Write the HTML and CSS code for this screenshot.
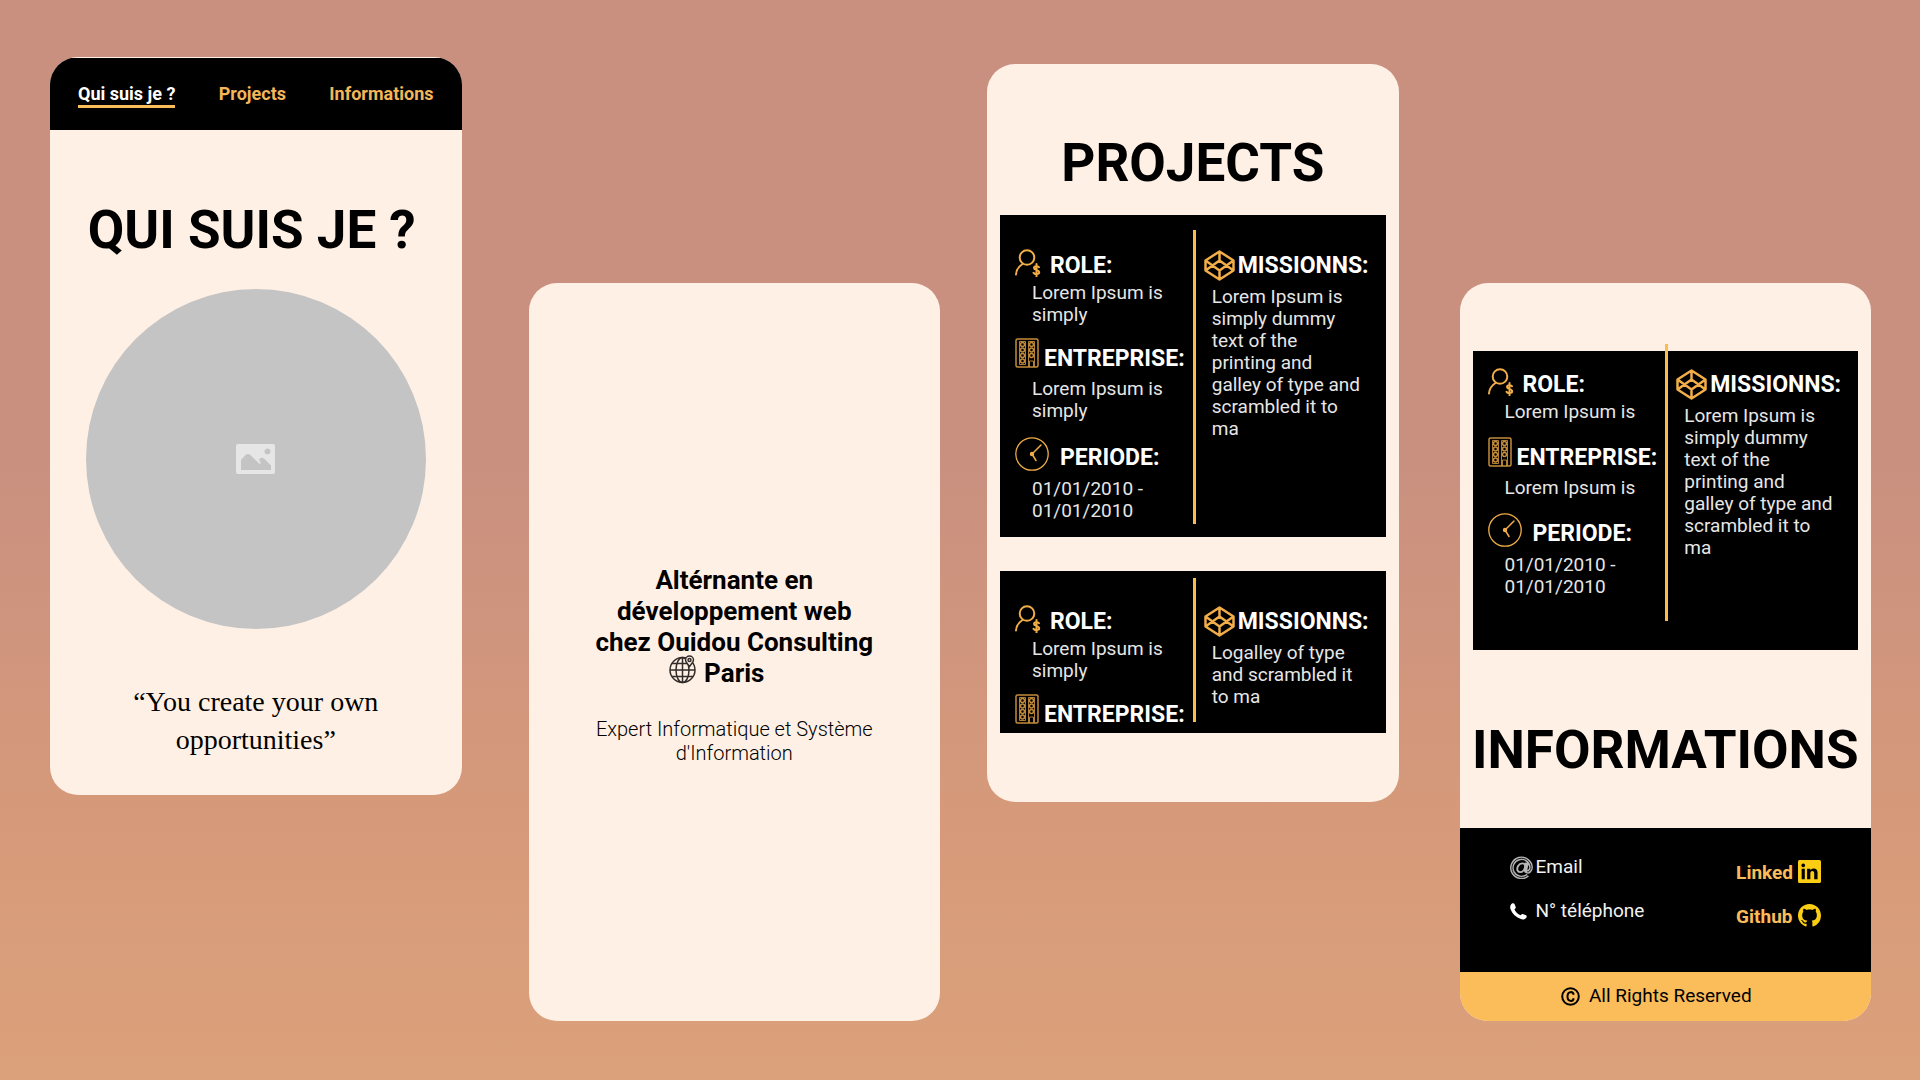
FILE: index.html
```html
<!DOCTYPE html>
<html lang="fr">
<head>
<meta charset="utf-8">
<title>Portfolio</title>
<link rel="stylesheet" href="styles.css">
</head>
<body>
<svg class="sprite" aria-hidden="true">
  <symbol id="role" viewBox="0 0 26 28">
    <g fill="none" stroke="currentColor" stroke-width="2" stroke-linecap="round">
      <circle cx="12" cy="8.500" r="7.300"/>
      <path d="M7.500 15C3.500 17.500 1.300 21 1 25.500"/>
      <path d="M24 18.200c-.8-1.400-5-1.700-5 .9 0 2.500 5.200 1.500 5.200 4.200 0 2.400-4.700 2.300-5.700.5M21.500 15v12.500"/>
    </g>
  </symbol>
  <symbol id="building" viewBox="0 0 24 30">
    <g fill="none" stroke="currentColor">
      <rect x="1" y="1" width="22" height="28" rx="1.500" stroke-width="1.500"/>
      <path d="M4.500 3.500h6v23h-6zM13.500 29V3.500h6V29M14.500 29v-6h4v6" stroke-width=".9"/>
      <g stroke-width="1.500">
        <circle cx="7.500" cy="6.500" r="2"/><circle cx="7.500" cy="12" r="2"/><circle cx="7.500" cy="17.500" r="2"/><circle cx="7.500" cy="23" r="2"/>
        <circle cx="16.500" cy="6.500" r="2"/><circle cx="16.500" cy="12" r="2"/><circle cx="16.500" cy="17.500" r="2"/>
      </g>
    </g>
  </symbol>
  <symbol id="clock" viewBox="0 0 34 34">
    <g fill="none" stroke="currentColor" stroke-linecap="round">
      <circle cx="17" cy="17" r="16.200" stroke-width="1.300"/>
      <path d="M26 8l-9 9 4 6.500" stroke-width="1.500"/>
    </g>
    <circle cx="17" cy="17" r="2.200" fill="currentColor"/>
  </symbol>
  <symbol id="codepen" viewBox="0 0 31 31">
    <path d="M15.500 1.500l14 9v10l-14 9-14-9v-10zM15.500 1.500v9M15.500 20.500v9M1.500 10.500l14 10 14-10M1.500 20.500l14-10 14 10" fill="none" stroke="currentColor" stroke-width="2.500" stroke-linejoin="round"/>
  </symbol>
  <symbol id="image" viewBox="0 0 39 30">
    <path fill-rule="evenodd" fill="currentColor" d="M2 0h35a2 2 0 0 1 2 2v26a2 2 0 0 1-2 2H2a2 2 0 0 1-2-2V2a2 2 0 0 1 2-2zM5 26h30v-4.500l-7-7q-2-1.500-4 0l-1 1.500 2 3-1.500 1-9-9q-3-2-5 0L5 16zM31.500 4.500a3 3 0 1 0 .01 0z"/>
  </symbol>
  <symbol id="globe" viewBox="0 0 27 29">
    <g fill="none" stroke="currentColor" stroke-width="1.500">
      <circle cx="13.500" cy="15" r="12.500"/><ellipse cx="13.500" cy="15" rx="6.500" ry="12.500"/>
      <path d="M13.500 2.500v25M1 15h25M3 8.500h16M3 21.500h21"/>
      <path d="M20.500 11.500c-2-3-4-4.500-4-6.500a4 4 0 0 1 8 0c0 2-2 3.500-4 6.500z" fill="#fff0e5"/><circle cx="20.500" cy="5" r="1.500"/>
    </g>
  </symbol>
  <symbol id="at" viewBox="0 0 24 24">
    <g fill="none" stroke="currentColor">
      <path d="M18.500 20A10 10 0 1 1 22 12c-.3 3.200-2.200 4.700-4 4.500-2-.2-1.900-2-1.500-3.500L17.500 7" stroke-width="3.800"/>
      <path d="M16 10.500c-.5-4-5.500-3.500-7.500 0s-.5 6.300 2 6.300c2.700 0 5-3 5.500-6.300z" stroke-width="2"/>
      <path d="M18.500 20A10 10 0 1 1 22 12c-.3 3.200-2.200 4.700-4 4.500" stroke="#000" stroke-width=".9"/>
    </g>
  </symbol>
  <symbol id="phone" viewBox="0 0 17 17">
    <path fill="currentColor" d="M1 1.500C2 0 4 0 4.500 1l1.300 3.200c.3 1-1 1.500-1.300 2.200 1 2.400 3.500 4.700 6 5.800.8-.3 1.200-1.500 2.200-1.200l3.300 1.300c1 .5 1 2-.2 3-1.300 1.300-3.300 1.500-5 .8C5.500 14 2 10.500.5 6 0 4.500 0 3 1 1.500z"/>
  </symbol>
  <symbol id="linkedin" viewBox="0 0 22 22">
    <path fill="currentColor" fill-rule="evenodd" d="M1.500 0h19A1.500 1.500 0 0 1 22 1.500v19a1.500 1.500 0 0 1-1.500 1.500h-19A1.500 1.500 0 0 1 0 20.500v-19A1.500 1.500 0 0 1 1.500 0zM3.500 8.300v10h3v-10zM5 3.300a1.800 1.800 0 1 0 .01 0zM8.700 8.300v10h3.100v-5.500c0-3 3.700-3 3.700-.2v5.700h3.200v-6.500c0-4.500-5-4.700-6.900-2V8.300z"/>
  </symbol>
  <symbol id="github" viewBox="0 0 16 16">
    <path fill="currentColor" d="M8 0C3.580 0 0 3.580 0 8c0 3.540 2.290 6.530 5.470 7.590.4.070.55-.17.55-.38 0-.19-.01-.82-.01-1.490-2.010.37-2.530-.49-2.690-.94-.09-.23-.48-.94-.82-1.130-.28-.15-.68-.52-.01-.53.63-.01 1.080.58 1.230.82.72 1.210 1.870.87 2.330.66.07-.52.28-.87.51-1.070-1.780-.2-3.640-.89-3.640-3.950 0-.87.31-1.590.82-2.150-.08-.2-.36-1.020.08-2.120 0 0 .67-.21 2.200.82.64-.18 1.320-.27 2-.27s1.360.09 2 .27c1.530-1.040 2.200-.82 2.200-.82.44 1.100.16 1.920.08 2.120.51.56.82 1.270.82 2.150 0 3.070-1.870 3.750-3.650 3.950.29.25.54.73.54 1.480 0 1.070-.01 1.930-.01 2.200 0 .21.15.46.55.38A8.010 8.010 0 0 0 16 8c0-4.420-3.580-8-8-8z"/>
  </symbol>
  <symbol id="copyright" viewBox="0 0 19 19">
    <g fill="none" stroke="currentColor" stroke-width="2">
      <circle cx="9.500" cy="9.500" r="8.300"/>
      <path d="M12.700 7.800C12 4 6.500 4 6.500 9.500s5.500 5.500 6.200 1.700"/>
    </g>
  </symbol>
</svg>

<main class="board">
  <section class="screen screen--about" id="about">
    <nav class="nav">
      <a class="nav__link nav__link--active" href="#about">Qui suis je ?</a>
      <a class="nav__link" href="#projects">Projects</a>
      <a class="nav__link" href="#informations">Informations</a>
    </nav>
    <h1 class="title">QUI SUIS JE ?</h1>
    <div class="portrait"><svg class="portrait__icon"><use href="#image"/></svg></div>
    <blockquote class="quote">“You create your own<br>opportunities”</blockquote>
  </section>

  <section class="screen screen--job">
    <h2 class="job">Altérnante en développement web chez Ouidou Consulting <span class="job__city"><svg class="job__globe"><use href="#globe"/></svg>Paris</span></h2>
    <p class="degree">Expert Informatique et Système d'Information</p>
  </section>

  <section class="screen screen--projects" id="projects">
    <h2 class="title">PROJECTS</h2>
    <article class="panel panel--full">
      <div class="facts">
        <div class="fact fact--role">
          <h3 class="fact__head"><svg class="fact__icon"><use href="#role"/></svg>ROLE:</h3>
          <p class="text">Lorem Ipsum is simply</p>
        </div>
        <div class="fact fact--company">
          <h3 class="fact__head"><svg class="fact__icon"><use href="#building"/></svg>ENTREPRISE:</h3>
          <p class="text">Lorem Ipsum is simply</p>
        </div>
        <div class="fact fact--period">
          <h3 class="fact__head"><svg class="fact__icon"><use href="#clock"/></svg>PERIODE:</h3>
          <p class="text">01/01/2010 - 01/01/2010</p>
        </div>
      </div>
      <div class="rule"></div>
      <div class="missions">
        <h3 class="missions__head"><svg class="missions__icon"><use href="#codepen"/></svg>MISSIONNS:</h3>
        <p class="text">Lorem Ipsum is simply dummy text of the printing and galley of type and scrambled it to ma</p>
      </div>
    </article>
    <article class="panel panel--cut">
      <div class="facts">
        <div class="fact fact--role">
          <h3 class="fact__head"><svg class="fact__icon"><use href="#role"/></svg>ROLE:</h3>
          <p class="text">Lorem Ipsum is simply</p>
        </div>
        <div class="fact fact--company">
          <h3 class="fact__head"><svg class="fact__icon"><use href="#building"/></svg>ENTREPRISE:</h3>
        </div>
      </div>
      <div class="rule"></div>
      <div class="missions">
        <h3 class="missions__head"><svg class="missions__icon"><use href="#codepen"/></svg>MISSIONNS:</h3>
        <p class="text">Logalley of type and scrambled it to ma</p>
      </div>
    </article>
  </section>

  <section class="screen screen--info" id="informations">
    <article class="panel panel--short">
      <div class="facts">
        <div class="fact fact--role">
          <h3 class="fact__head"><svg class="fact__icon"><use href="#role"/></svg>ROLE:</h3>
          <p class="text">Lorem Ipsum is</p>
        </div>
        <div class="fact fact--company">
          <h3 class="fact__head"><svg class="fact__icon"><use href="#building"/></svg>ENTREPRISE:</h3>
          <p class="text">Lorem Ipsum is</p>
        </div>
        <div class="fact fact--period">
          <h3 class="fact__head"><svg class="fact__icon"><use href="#clock"/></svg>PERIODE:</h3>
          <p class="text">01/01/2010 - 01/01/2010</p>
        </div>
      </div>
      <div class="rule"></div>
      <div class="missions">
        <h3 class="missions__head"><svg class="missions__icon"><use href="#codepen"/></svg>MISSIONNS:</h3>
        <p class="text">Lorem Ipsum is simply dummy text of the printing and galley of type and scrambled it to ma</p>
      </div>
    </article>
    <h2 class="title">INFORMATIONS</h2>
    <footer>
      <div class="contact">
        <ul class="contact__list">
          <li class="contact__item"><svg class="contact__at"><use href="#at"/></svg>Email</li>
          <li class="contact__item"><svg class="contact__phone"><use href="#phone"/></svg>N° téléphone</li>
        </ul>
        <ul class="contact__list contact__list--social">
          <li><a class="social" href="#linkedin">Linked<svg class="social__icon"><use href="#linkedin"/></svg></a></li>
          <li><a class="social" href="#github">Github<svg class="social__icon"><use href="#github"/></svg></a></li>
        </ul>
      </div>
      <p class="rights"><svg class="rights__icon"><use href="#copyright"/></svg>All Rights Reserved</p>
    </footer>
  </section>
</main>
</body>
</html>
```
FILE: styles.css
```css
* {
  box-sizing: border-box;
  margin: 0;
  padding: 0;
}

body {
  min-height: 100vh;
  background: linear-gradient(#c99080 0%, #c99080 42%, #d69a7a 76%, #dba17a 100%);
  font-family: Roboto, "Liberation Sans", sans-serif;
  color: #000;
}

ul {
  list-style: none;
}

a {
  text-decoration: none;
}

.sprite {
  display: none;
}

/* Board of four phone screens, with a gutter column between each pair */
.board {
  display: grid;
  grid-template-columns:
    minmax(0, 1fr) 67px minmax(0, 1fr) 47px
    minmax(0, 1fr) 61px minmax(0, 1fr);
  align-items: start;
  padding: 0 49px 58px 50px;
}

.screen {
  grid-row: 1;
  overflow: hidden;
  border-radius: 28px;
  background: #fff0e5;
}

.screen--about {
  grid-column: 1;
  margin-top: 57px;
  padding: 1px 0 36px;
}

.screen--job {
  grid-column: 3;
  margin-top: 283px;
  padding: 282px 60px 256px;
  text-align: center;
}

.screen--projects {
  grid-column: 5;
  margin-top: 64px;
  padding: 67px 13px 69px;
}

.screen--info {
  grid-column: 7;
  margin-top: 283px;
  padding-top: 68px;
}

.title {
  font-size: 53px;
  line-height: 64px;
  font-weight: 700;
  text-align: center;
  white-space: nowrap;
}

/* About */
.nav {
  display: flex;
  justify-content: space-between;
  height: 72px;
  padding: 25px 28px 0;
  background: #000;
}

.nav__link {
  height: 25px;
  border-bottom: 3px solid transparent;
  font-size: 18px;
  line-height: 21px;
  font-weight: 700;
  color: #f3b658;
}

.nav__link--active {
  border-color: #fbbc5a;
  color: #fff;
}

.screen--about .title {
  margin: 68px 0 27px;
  padding-right: 8px;
}

.portrait {
  display: flex;
  align-items: center;
  justify-content: center;
  width: 340px;
  height: 340px;
  margin: 0 auto;
  border-radius: 50%;
  background: #c4c4c4;
}

.portrait__icon {
  width: 39px;
  height: 30px;
  color: #e6e6e6;
}

.quote {
  margin-top: 54px;
  font-family: "Liberation Serif", serif;
  font-size: 28px;
  line-height: 38px;
  text-align: center;
}

/* Job */
.job {
  font-size: 26px;
  line-height: 31px;
}

.job__city {
  position: relative;
}

.job__globe {
  position: absolute;
  right: 100%;
  bottom: 4px;
  width: 27px;
  height: 29px;
  margin-right: 8px;
  color: #332d2a;
}

.degree {
  margin-top: 28px;
  font-size: 20px;
  line-height: 24px;
  font-weight: 300;
}

/* Project panels */
.panel {
  display: grid;
  grid-template-columns: minmax(0, 193fr) 3px minmax(0, 190fr);
  background: #000;
  color: #fff;
}

.panel--full {
  margin-top: 20px;
}

.panel--cut {
  margin-top: 34px;
}

.panel--short {
  margin: 0 13px;
}

.facts {
  display: flex;
  flex-direction: column;
  gap: 12px;
  padding: 34px 0 15px 15px;
}

.panel--cut .facts {
  padding-bottom: 4px;
}

.panel--short .facts {
  gap: 14px;
  padding: 17px 0 52px 15px;
}

.fact__head,
.missions__head {
  display: flex;
  font-size: 23px;
  line-height: 28px;
  white-space: nowrap;
}

.fact__head {
  align-items: flex-end;
}

.fact__icon,
.missions__icon {
  flex: none;
  color: #f0ad48;
}

.fact--role .fact__icon {
  width: 26px;
  height: 28px;
  margin: 0 9px 3px 0;
}

.fact--company .fact__icon {
  width: 24px;
  height: 30px;
  margin: 0 5px 5px 0;
  color: #c48c3a;
}

.fact--period .fact__icon {
  width: 34px;
  height: 34px;
  margin: 0 11px 1px 0;
}

.fact--period {
  margin-top: 3px;
}

.panel--short .fact--period {
  margin-top: 0;
}

.text {
  max-width: 150px;
  font-size: 19px;
  line-height: 22px;
  color: #e6e6e6;
}

.fact .text {
  margin: 5px 0 0 17px;
}

.fact--role .text {
  margin-top: 2px;
}

.fact--period .text {
  margin-top: 6px;
}

.rule {
  margin: 15px 0 13px;
  background: #fbbc4c;
}

.panel--cut .rule {
  margin: 7px 0 11px;
}

.panel--short .rule {
  margin: -7px 0 29px;
}

.missions {
  padding: 35px 0 0 8px;
}

.panel--short .missions {
  padding-top: 18px;
}

.missions__head {
  align-items: center;
  gap: 3px;
}

.missions__icon {
  width: 31px;
  height: 31px;
}

.missions .text {
  margin: 5px 0 0 8px;
}

.screen--info .title {
  display: flex;
  justify-content: center;
  margin: 68px 0 46px;
}

/* Footer */
.contact {
  display: flex;
  justify-content: space-between;
  padding: 23px 50px 39px;
  background: #000;
  font-size: 19px;
  line-height: 32px;
}

.contact__list {
  display: flex;
  flex-direction: column;
  gap: 12px;
}

.contact__list--social {
  padding-top: 6px;
}

.contact__item,
.social {
  display: flex;
  align-items: center;
  color: #f2f2f2;
}

.social {
  gap: 5px;
  font-weight: 700;
  color: #fbbc5a;
}

.contact__at {
  width: 23px;
  height: 23px;
  margin-right: 3px;
  color: #b5b5b5;
}

.contact__phone {
  width: 17px;
  height: 17px;
  margin-right: 9px;
  color: #fff;
}

.social__icon {
  width: 23px;
  height: 23px;
  margin-bottom: 3px;
  color: #fbce14;
}

.rights {
  display: flex;
  align-items: center;
  justify-content: center;
  gap: 9px;
  padding: 8px 18px 9px 0;
  background: #fbbc5a;
  font-size: 19px;
  line-height: 32px;
}

.rights__icon {
  width: 19px;
  height: 19px;
}
```
